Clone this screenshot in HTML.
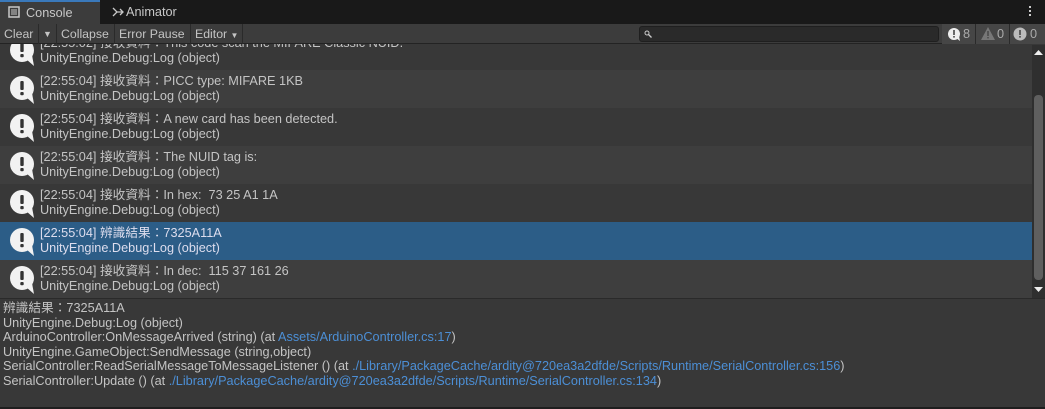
<!DOCTYPE html><html><head><meta charset="utf-8"><style>
*{margin:0;padding:0;box-sizing:border-box}
body{width:1045px;height:409px;background:#383838;font-family:"Liberation Sans","Noto Sans CJK TC",sans-serif;font-size:12.7px;color:#c4c4c4;position:relative;overflow:hidden}
.a{position:absolute;white-space:pre}
.tabbar{left:0;top:0;width:1045px;height:24px;background:#191919}
.tab1{left:0;top:0;width:100px;height:24px;background:#3c3c3c;border-top:2px solid #3a79bb;color:#c8c8c8;font-size:12.7px;padding-left:26px;line-height:22px}
.tab2{left:112px;top:0;height:24px;line-height:24px;color:#c8c8c8;font-size:12.7px}
.tb{left:0;top:24px;width:1045px;height:20px;background:#3c3c3c;border-bottom:1px solid #232323}
.btn{top:24px;height:20px;line-height:20px;color:#c4c4c4;border-right:1px solid #2a2a2a;padding:0 4px;font-size:12.3px}
.search{left:639px;top:26px;width:300px;height:16px;background:#2a2a2a;border:1px solid #1f1f1f;border-radius:3px}
.row{left:0;width:1032px;height:38px}
.l1,.l2{left:40px;line-height:15px;height:15px}
.ic{left:9px;width:26px;height:30px}
.det{left:3px;line-height:14.6px}
a{color:#4c8fd6;text-decoration:none}
</style></head><body>
<div class="a tabbar"></div>
<div class="a tab1">Console</div>
<svg class="a" style="left:8px;top:6px" width="12" height="12"><rect x="1" y="1" width="10" height="10" fill="none" stroke="#c8c8c8" stroke-width="1.5"/><path d="M3 4h6M3 6h6M3 8h6" stroke="#c8c8c8"/></svg>
<svg class="a" style="left:112px;top:6px" width="12" height="12"><path d="M1 2l4 4-4 4M5 6h6M8 3l3 3-3 3" stroke="#c8c8c8" fill="none" stroke-width="1.3"/></svg>
<div class="a tab2" style="left:126px">Animator</div>
<div class="a" style="left:1029px;top:6px;width:2px;height:2px;background:#ccc;box-shadow:0 4px #ccc,0 8px #ccc"></div>

<!-- rows -->
<div class="a row" style="top:32px;background:#383838"></div>
<div class="a row" style="top:70px;background:#3e3e3e"></div>
<div class="a row" style="top:108px;background:#383838"></div>
<div class="a row" style="top:146px;background:#3e3e3e"></div>
<div class="a row" style="top:184px;background:#383838"></div>
<div class="a row" style="top:222px;background:#2c5d87"></div>
<div class="a row" style="top:260px;background:#3e3e3e"></div>

<div id="rows"></div>
<script>
var t=[[32,"[22:55:02] 接收資料：This code scan the MIFARE Classic NUID."],[70,"[22:55:04] 接收資料：PICC type: MIFARE 1KB"],[108,"[22:55:04] 接收資料：A new card has been detected."],[146,"[22:55:04] 接收資料：The NUID tag is:"],[184,"[22:55:04] 接收資料：In hex:  73 25 A1 1A"],[222,"[22:55:04] 辨識結果：7325A11A"],[260,"[22:55:04] 接收資料：In dec:  115 37 161 26"]];
var h="";t.forEach(function(r){var y=r[0];var c=y==222?"#dde":"#c4c4c4";
h+='<div class="a l1" style="top:'+(y+4)+'px;color:'+c+'">'+r[1]+'</div>';
h+='<div class="a l2" style="top:'+(y+19)+'px;color:'+c+'">UnityEngine.Debug:Log (object)</div>';
var top=y+6;h+='<svg class="a ic" style="top:'+top+'px" width="26" height="30" viewBox="0 0 26 30"><circle cx="13" cy="12" r="12" fill="#f2f2f2"/><path d="M17 21l8 7-2-11z" fill="#f2f2f2"/><rect x="11.3" y="5" width="3.4" height="9" rx="1" fill="#333"/><rect x="11.3" y="16" width="3.4" height="3.2" rx="1" fill="#333"/></svg>';});
document.getElementById("rows").innerHTML=h;
</script>
<div class="a tb"></div>
<div class="a btn" style="left:0;width:39px">Clear</div>
<div class="a btn" style="left:39px;width:18px;font-size:9px">▼</div>
<div class="a btn" style="left:57px;width:58px">Collapse</div>
<div class="a btn" style="left:115px;width:76px">Error Pause</div>
<div class="a btn" style="left:191px;width:52px">Editor <span style="font-size:8px">▼</span></div>
<div class="a search"></div>
<svg class="a" style="left:644px;top:30px" width="8" height="8"><circle cx="3" cy="3" r="2" stroke="#ccc" fill="none"/><path d="M4.5 4.5l3 3" stroke="#ccc" stroke-width="1.3"/></svg>
<div class="a" style="left:942px;top:24px;width:103px;height:20px;background:#464646"></div>
<div class="a" style="left:975px;top:24px;width:1px;height:20px;background:#2a2a2a"></div>
<div class="a" style="left:1009px;top:24px;width:1px;height:20px;background:#2a2a2a"></div>
<svg class="a" style="left:947px;top:27px" width="15" height="15"><circle cx="7" cy="7" r="6" fill="#eee"/><path d="M9 11l4 3-1-5z" fill="#eee"/><rect x="6.2" y="3" width="1.6" height="5" fill="#464646"/><rect x="6.2" y="9" width="1.6" height="1.6" fill="#464646"/></svg>
<div class="a" style="left:963px;top:24px;line-height:20px;color:#aaa">8</div>
<svg class="a" style="left:981px;top:27px" width="14" height="13"><path d="M7 0L14 13H0z" fill="#777"/><rect x="6.3" y="4" width="1.4" height="5" fill="#464646"/><rect x="6.3" y="10" width="1.4" height="1.4" fill="#464646"/></svg>
<div class="a" style="left:997px;top:24px;line-height:20px;color:#aaa">0</div>
<svg class="a" style="left:1013px;top:27px" width="14" height="14"><circle cx="7" cy="7" r="6.5" fill="#bbb"/><rect x="6.2" y="3" width="1.6" height="5" fill="#464646"/><rect x="6.2" y="9" width="1.6" height="1.6" fill="#464646"/></svg>
<div class="a" style="left:1030px;top:24px;line-height:20px;color:#aaa">0</div>

<!-- scrollbar -->
<div class="a" style="left:1032px;top:45px;width:13px;height:253px;background:#2f2f2f"></div>
<div class="a" style="left:1034px;top:95px;width:9px;height:185px;background:#5f5f5f;border-radius:4px"></div>
<svg class="a" style="left:1034px;top:50px" width="9" height="6"><path d="M0 5L4.5 0 9 5z" fill="#eee"/></svg>
<svg class="a" style="left:1034px;top:287px" width="9" height="6"><path d="M0 0L4.5 5 9 0z" fill="#eee"/></svg>

<!-- detail -->
<div class="a" style="left:0;top:298px;width:1045px;height:109px;background:#383838;border-top:1px solid #2a2a2a"></div>
<div class="a det" style="top:301px">辨識結果：7325A11A
UnityEngine.Debug:Log (object)
ArduinoController:OnMessageArrived (string) (at <a>Assets/ArduinoController.cs:17</a>)
UnityEngine.GameObject:SendMessage (string,object)
SerialController:ReadSerialMessageToMessageListener () (at <a>./Library/PackageCache/ardity@720ea3a2dfde/Scripts/Runtime/SerialController.cs:156</a>)
SerialController:Update () (at <a>./Library/PackageCache/ardity@720ea3a2dfde/Scripts/Runtime/SerialController.cs:134</a>)</div>
<div class="a" style="left:0;top:407px;width:1045px;height:2px;background:#1e1e1e"></div>
</body></html>
